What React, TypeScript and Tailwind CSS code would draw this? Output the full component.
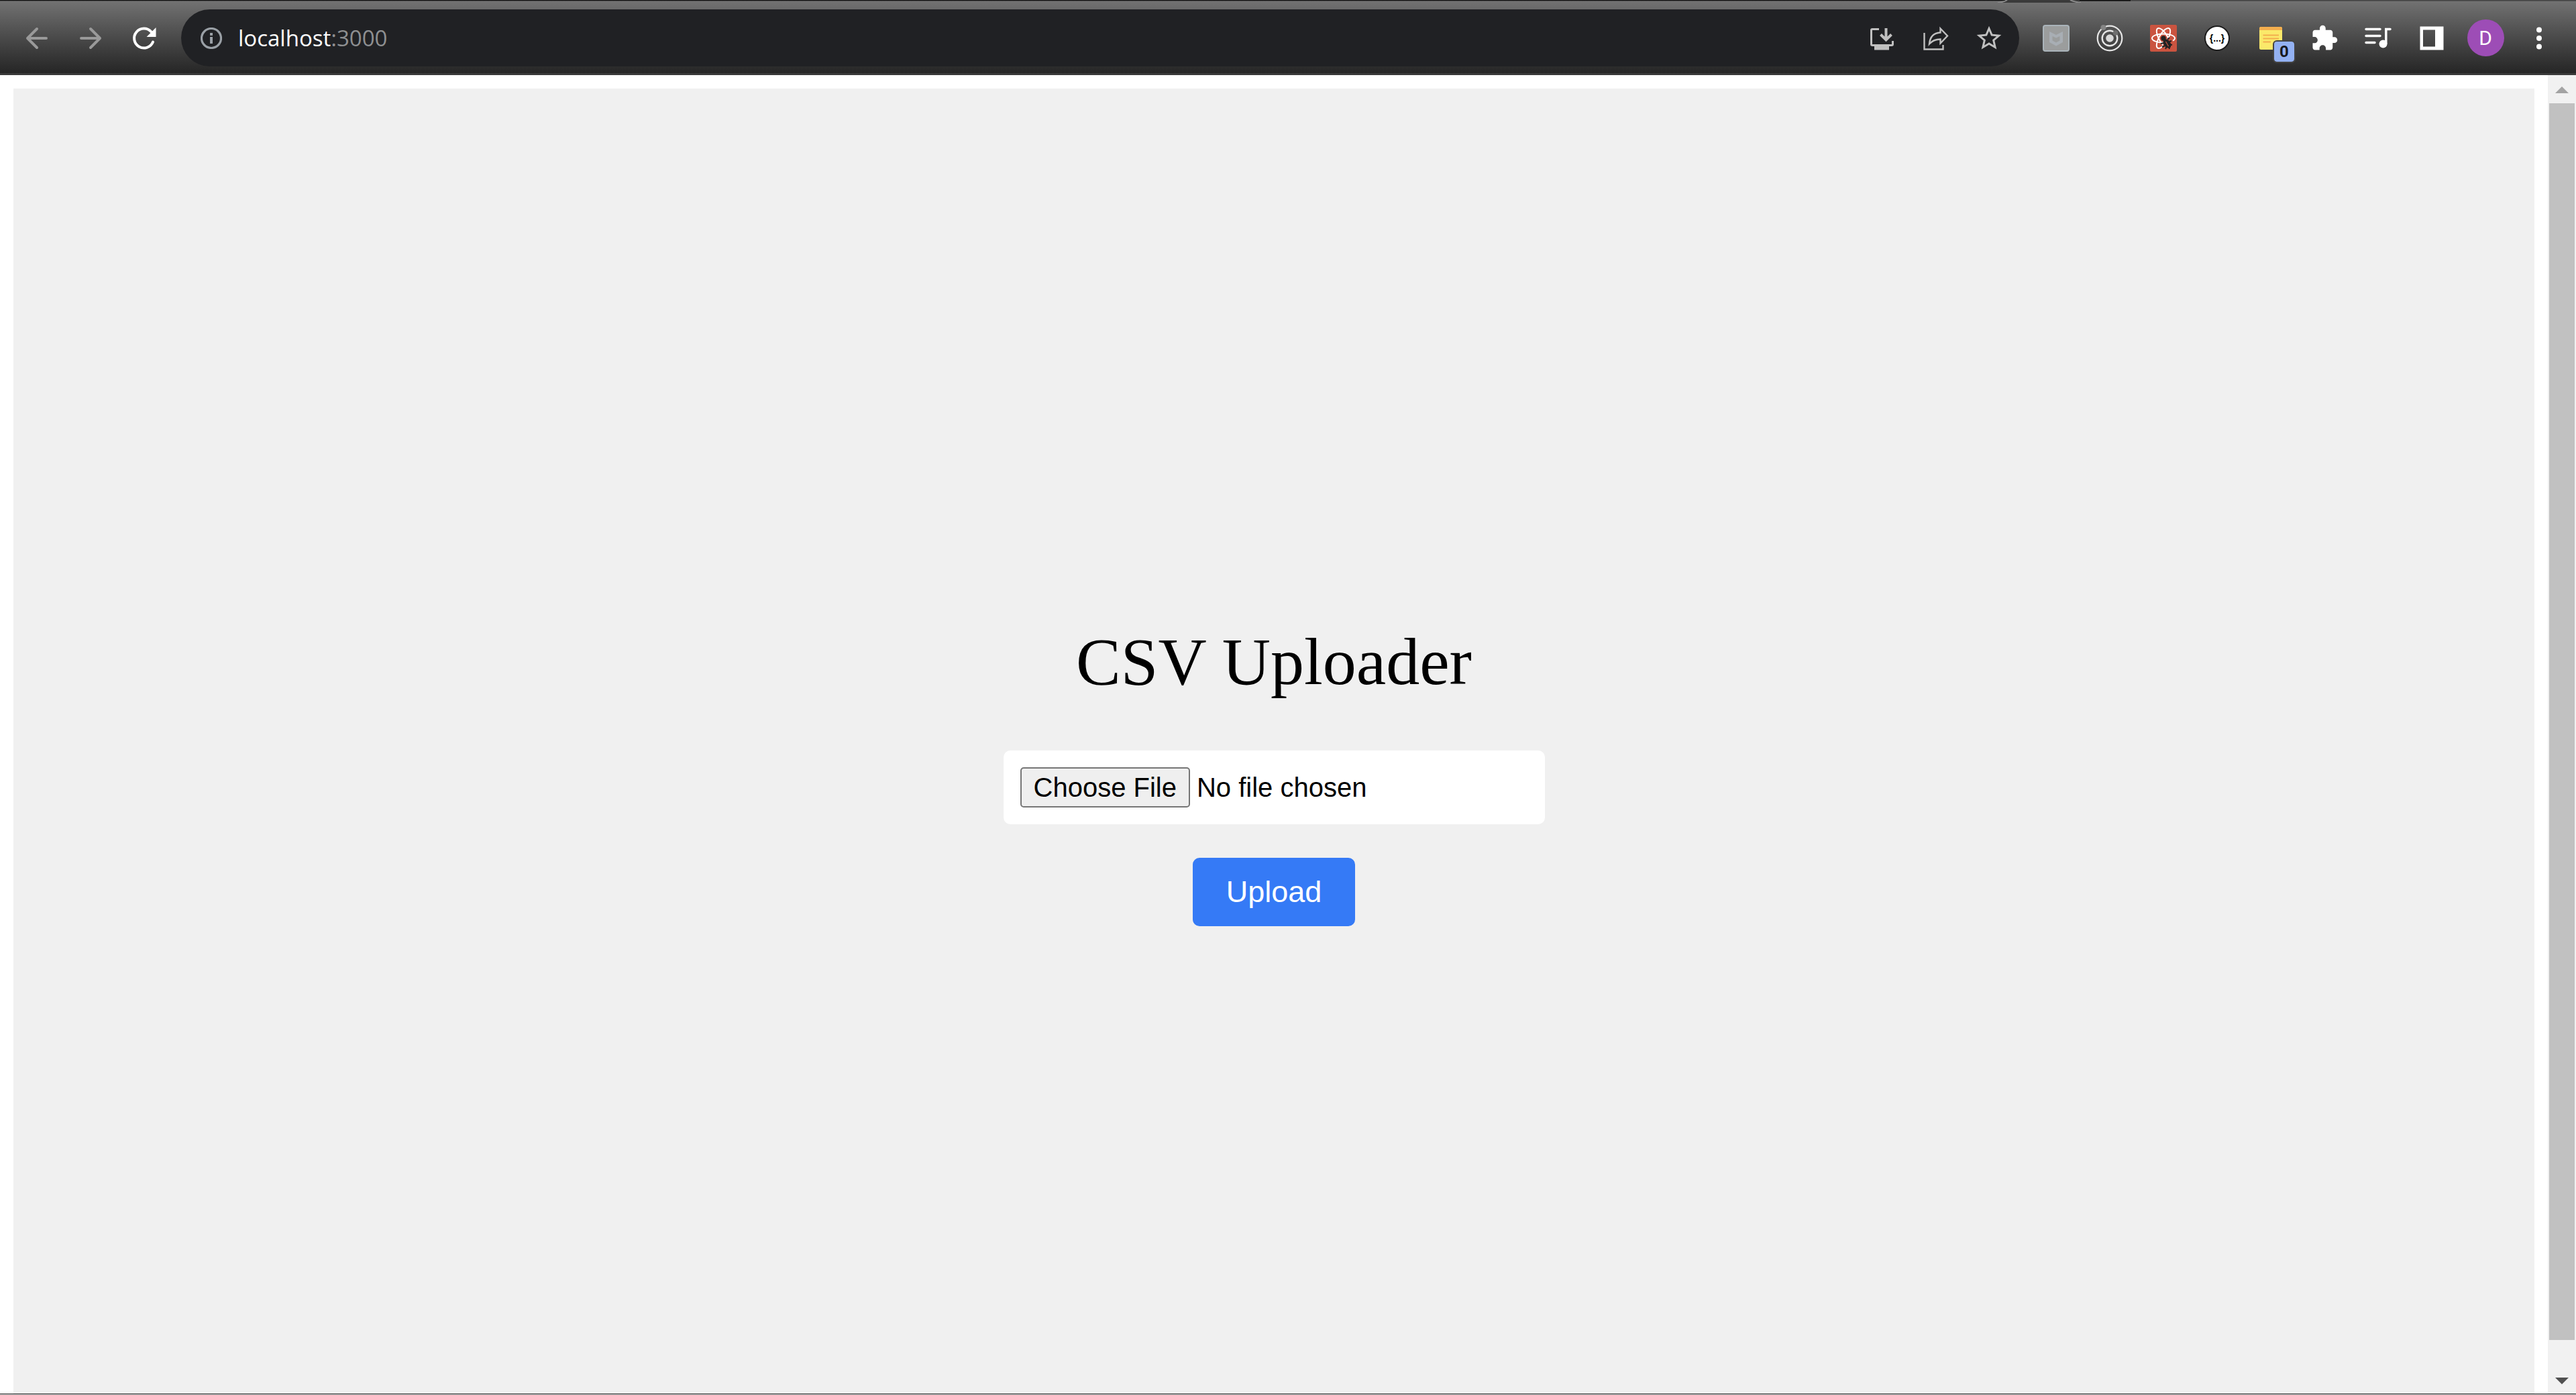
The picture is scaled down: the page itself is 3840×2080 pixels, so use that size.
import React from "react";
import { MdExtension, MdStarBorder } from "react-icons/md";

const slot = "flex h-20 w-20 shrink-0 items-center justify-center";

function IconButton({ label, children }: { label: string; children: React.ReactNode }) {
  return (
    <button type="button" aria-label={label} className={slot}>
      {children}
    </button>
  );
}

function TabStripEdge() {
  return (
    <div className="relative h-[2px] shrink-0 border-b border-[#555555] bg-[#0d0d0d]">
      <svg className="absolute top-0 right-0 h-1 w-[864px]" viewBox="0 0 864 4">
        <path d="M14 0H124V4H8Z" fill="#3a3a3a" />
        <path d="M16 0Q12 3 2 4M110 0Q116 3 126 4" fill="none" stroke="#8a8a8a" strokeWidth="2" />
        <path d="M124 0H200V1.500H124Z" fill="#0d0d0d" />
        <path d="M200 0H864V1H200Z" fill="#444444" />
      </svg>
    </div>
  );
}

function Navigation() {
  return (
    <nav className="flex shrink-0 items-center">
      <IconButton label="Back">
        <svg className="h-10 w-10" viewBox="0 0 40 40" fill="none" stroke="#999999" strokeWidth="4" strokeLinecap="round" strokeLinejoin="round">
          <path d="M20 6 6 20l14 14M6 20h28" />
        </svg>
      </IconButton>
      <IconButton label="Forward">
        <svg className="h-10 w-10" viewBox="0 0 40 40" fill="none" stroke="#999999" strokeWidth="4" strokeLinecap="round" strokeLinejoin="round">
          <path d="M20 6l14 14-14 14M34 20H6" />
        </svg>
      </IconButton>
      <IconButton label="Reload">
        <svg className="h-10 w-10" viewBox="0 0 40 40">
          <path d="M33 25.500A14.500 14.500 0 1 1 30.500 10.500" fill="none" stroke="#fff" strokeWidth="4" strokeLinecap="round" />
          <path d="M37.500 4v14H23.500z" fill="#fff" />
        </svg>
      </IconButton>
    </nav>
  );
}

function AddressBar() {
  return (
    <div className="flex h-[85px] grow items-center rounded-full bg-[#202124] pr-[5px] pl-[29px] text-[#c0c0c0]">
      <button type="button" aria-label="View site information" className="shrink-0">
        <svg className="h-8 w-8" viewBox="0 0 32 32">
          <circle cx="16" cy="16" r="14.500" fill="none" stroke="#9aa0a6" strokeWidth="3.200" />
          <path d="M14 8h4v4h-4zM14 14h4v10h-4z" fill="#9aa0a6" />
        </svg>
      </button>
      <div className="ml-6 grow font-['Open_Sans','Noto_Sans',sans-serif] text-[33px] leading-10 text-white">
        localhost<span className="text-[#8e8f91]">:3000</span>
      </div>
      <IconButton label="Install app">
        <svg className="h-10 w-10" viewBox="0 0 40 40" fill="none" stroke="currentColor">
          <path d="M16 6.500H6Q4.500 6.500 4.500 8V29Q4.500 30.500 6 30.500H35Q36.500 30.500 36.500 29V24" strokeWidth="3" />
          <path d="M9 31H31V37.500H9Z" fill="currentColor" stroke="none" />
          <path d="M26.500 5V22M18.500 14.500l8 8 8-8" strokeWidth="4" />
        </svg>
      </IconButton>
      <IconButton label="Share">
        <svg className="h-10 w-10" viewBox="0 0 40 40" fill="none" stroke="currentColor" strokeWidth="2.400">
          <path d="M3.500 12V36.500H31.500V30" />
          <path d="M27.500 5.500 38 16.500 27.500 27.500V21.500C20 21.500 15 24 11 28.500 12 18 18 12 27.500 11.500Z" />
        </svg>
      </IconButton>
      <IconButton label="Bookmark this page">
        <MdStarBorder className="h-11 w-11" />
      </IconButton>
    </div>
  );
}

function Extensions() {
  return (
    <div className="flex shrink-0 items-center text-white">
      <IconButton label="Web protection">
        <svg className="h-10 w-10" viewBox="0 0 40 40">
          <rect x="1" y="1" width="38" height="38" rx="3" fill="#9b9d9d" stroke="#aab4ba" strokeWidth="2" />
          <path d="M10 10 20 15 30 10V26L20 31.500 10 26ZM14.500 17V23.500L20 26.500 25.500 23.500V17L20 19.500Z" fill="#a8aeb4" fillRule="evenodd" />
        </svg>
      </IconButton>
      <IconButton label="Orbit">
        <svg className="h-10 w-10" viewBox="0 0 40 40" fill="none" stroke="#e6e6e6">
          <circle cx="20" cy="20" r="18.300" strokeWidth="2.200" />
          <circle cx="20" cy="20" r="11.300" strokeWidth="2.400" />
          <circle cx="20" cy="20" r="5.800" fill="#dadada" stroke="none" />
          <circle cx="10.500" cy="4" r="4" fill="#858585" stroke="none" />
          <circle cx="28.500" cy="12" r="3.800" fill="#707070" stroke="none" />
        </svg>
      </IconButton>
      <IconButton label="React developer tools">
        <svg className="h-10 w-10" viewBox="0 0 40 40" fill="none">
          <rect width="40" height="40" rx="2" fill="#ca5440" />
          <g stroke="#fff" strokeWidth="2">
            <ellipse cx="20" cy="20" rx="17" ry="6.500" />
            <ellipse cx="20" cy="20" rx="17" ry="6.500" transform="rotate(60 20 20)" />
            <ellipse cx="20" cy="20" rx="17" ry="6.500" transform="rotate(120 20 20)" />
          </g>
          <path d="M22 24 31 19 37 28 33 35 25 37 19 31Z" fill="#ca5440" />
          <circle cx="20" cy="20" r="3.700" fill="#222" />
          <ellipse cx="25.500" cy="28" rx="5" ry="7.500" transform="rotate(-35 25.500 28)" fill="#222" />
          <path d="M16 28l5-1M18 33l5-2M23 36l2-4M26 22l3-3M29 25l3-1M29 29l4 1M28 31l1 5" stroke="#222" strokeWidth="2" />
          <path d="M23.500 25l4 7" stroke="#ca5440" strokeWidth="1.200" />
        </svg>
      </IconButton>
      <IconButton label="JSON viewer">
        <span className="flex h-[38px] w-[38px] items-center justify-center rounded-full border-2 border-[#1d1d1d] bg-white font-['Liberation_Sans',sans-serif] text-sm leading-4 font-bold text-black">
          {"{...}"}
        </span>
      </IconButton>
      <button type="button" aria-label="Notes" className={`${slot} relative`}>
        <svg className="h-10 w-10" viewBox="0 0 40 40">
          <rect x="3" y="3" width="34" height="34" rx="2.500" fill="#fbe96a" />
          <path d="M3 8V5.500Q3 3 5.500 3H34.500Q37 3 37 5.500V8Z" fill="#f3ae4e" />
          <path d="M8.500 15.500H32M8.500 20.500H32M8.500 25.500H20" stroke="#f3ae4e" strokeWidth="2" />
        </svg>
        <span className="absolute top-[45px] left-[45px] flex h-[30px] w-[30px] items-center justify-center rounded-[4px] bg-[#93b1f2] font-[Roboto,sans-serif] text-2xl leading-6 font-bold text-[#17191f] outline-2 outline-[#444444]">
          0
        </span>
      </button>
      <IconButton label="Extensions">
        <MdExtension className="h-[42px] w-[42px]" />
      </IconButton>
      <IconButton label="Media controls">
        <svg className="h-10 w-10" viewBox="0 0 40 40" fill="none" stroke="currentColor" strokeWidth="3.500" strokeLinecap="round">
          <path d="M2 6.500H23M2 16.500H23M2 26.500H15M31.800 28V6.500H38" />
          <circle cx="27.500" cy="28.500" r="6" fill="currentColor" stroke="none" />
        </svg>
      </IconButton>
      <IconButton label="Side panel">
        <svg className="h-10 w-10" viewBox="0 0 40 40">
          <path d="M2.500 2.500H37.500V37.500H2.500ZM7 7.500V32.500H25V7.500Z" fill="currentColor" fillRule="evenodd" />
        </svg>
      </IconButton>
      <IconButton label="Profile">
        <span className="flex h-[55px] w-[55px] items-center justify-center rounded-full bg-[#9d4db6] font-[Roboto,sans-serif] text-3xl">
          D
        </span>
      </IconButton>
      <IconButton label="Menu">
        <svg className="h-10 w-10" viewBox="0 0 40 40" fill="currentColor">
          <circle cx="20" cy="7.500" r="4" />
          <circle cx="20" cy="20" r="4" />
          <circle cx="20" cy="32.500" r="4" />
        </svg>
      </IconButton>
    </div>
  );
}

function Scrollbar() {
  return (
    <div aria-hidden="true" className="flex w-[42px] shrink-0 flex-col items-center bg-[#f1f1f1]">
      <div className="flex h-[42px] shrink-0 items-center">
        <svg className="h-5 w-5" viewBox="0 0 20 20"><path d="M10 6 20 16H0Z" fill="#a3a3a3" /></svg>
      </div>
      <div className="flex w-[38px] grow flex-col">
        <div className="h-[98%] bg-[#c1c1c1]" />
      </div>
      <div className="flex h-[42px] shrink-0 items-center">
        <svg className="h-5 w-5" viewBox="0 0 20 20"><path d="M0 7H20L10 17Z" fill="#505050" /></svg>
      </div>
    </div>
  );
}

export default function App() {
  return (
    <div className="flex h-screen flex-col bg-white pb-px">
      <header className="flex h-28 shrink-0 flex-col">
        <TabStripEdge />
        <div className="flex grow items-center gap-[15px] border-b-3 border-[#3a3a3a] bg-linear-to-b from-[#727272] to-[#262626] px-[15px] pt-[2px]">
          <Navigation />
          <AddressBar />
          <Extensions />
        </div>
      </header>
      <div className="flex min-h-0 grow border-b border-black">
        <div className="flex grow px-5 pt-5">
          <main className="flex grow flex-col items-center justify-center bg-[#f0f0f0] pt-25 text-black">
            <h1 className="mb-[75px] font-['Liberation_Serif',serif] text-[100px] leading-[115px]">
              CSV Uploader
            </h1>
            <form className="flex flex-col items-center gap-[50px] font-['Liberation_Sans',sans-serif]" onSubmit={(event) => event.preventDefault()}>
              <input
                type="file"
                accept=".csv"
                aria-label="CSV file"
                className="w-[807px] rounded-[10px] bg-white p-[25px] text-[40px] leading-[46px] file:mr-[10px] file:h-15 file:rounded-[5px] file:border-2 file:border-solid file:border-[#767676] file:bg-[#efefef] file:px-[18px] file:text-black"
              />
              <button type="submit" className="rounded-[10px] bg-[#357af6] px-[50px] py-[25px] text-[45px] leading-[52px] text-white">
                Upload
              </button>
            </form>
          </main>
        </div>
        <Scrollbar />
      </div>
    </div>
  );
}
